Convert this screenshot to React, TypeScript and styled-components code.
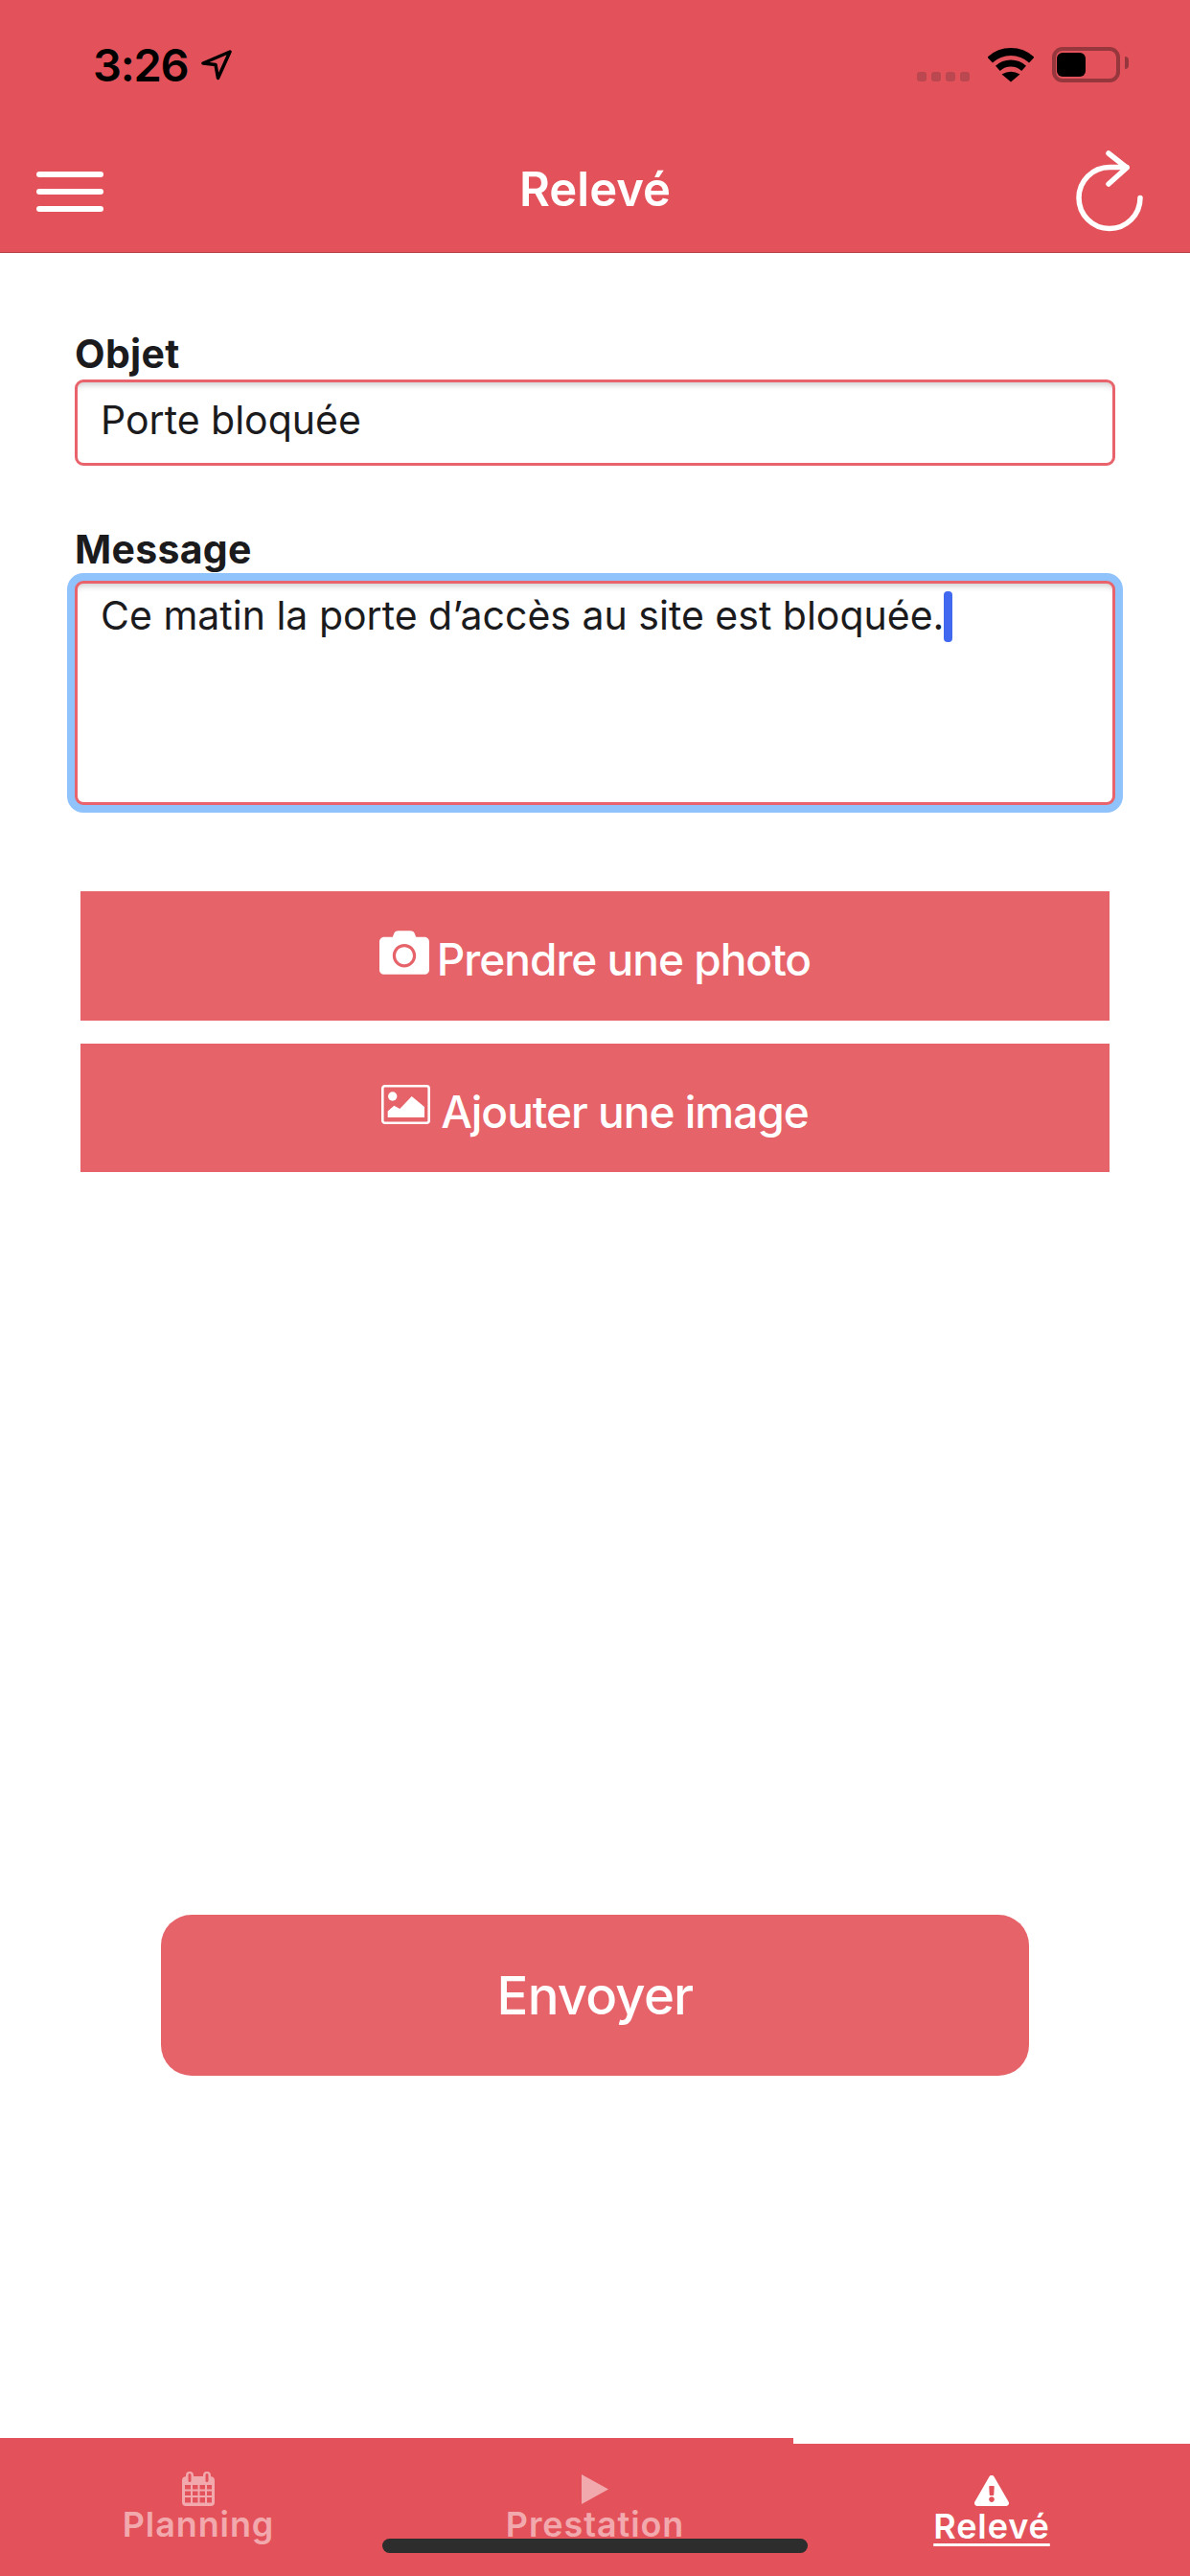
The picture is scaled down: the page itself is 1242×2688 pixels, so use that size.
import React from "react";
import styled, { createGlobalStyle } from "styled-components";
import { FaCamera, FaExclamationTriangle } from "react-icons/fa";

const RED = "#E3525A";
const SOFT_RED = "#E6636A";

const GlobalStyle = createGlobalStyle`
    html, body {
        margin: 0;
        padding: 0;
        background: #FFFFFF;
    }
    * {
        box-sizing: border-box;
    }
`;

const Screen = styled.div`
    position: relative;
    display: flex;
    flex-direction: column;
    width: 1242px;
    height: 2688px;
    overflow: hidden;
    background: #FFFFFF;
    font-family: Inter, "Liberation Sans", sans-serif;
    color: #1B1B1D;
`;

const Header = styled.header`
    height: 264px;
    background: ${RED};
    border-bottom: 1px solid #B5434A;
    color: #FFFFFF;
`;

const StatusBar = styled.div`
    display: flex;
    justify-content: space-between;
    align-items: flex-start;
    height: 132px;
    padding: 44px 73px 0 97px;
`;

const TimeGroup = styled.div`
    display: flex;
    align-items: flex-start;
    gap: 14px;
`;

const Time = styled.span`
    font-size: 47px;
    line-height: 48px;
    font-weight: 600;
    letter-spacing: -1.2px;
    color: #000000;
`;

const LocationIcon = styled.svg`
    width: 32px;
    height: 32px;
    margin-top: 8px;
`;

const StatusIcons = styled.div`
    display: flex;
    align-items: flex-start;
    padding-top: 5px;
`;

const SignalDots = styled.div`
    display: flex;
    gap: 5px;
    margin: 26px 19px 0 0;
`;

const SignalDot = styled.span`
    width: 10px;
    height: 10px;
    border-radius: 3px;
    background: #BB4850;
`;

const WifiIcon = styled.svg`
    width: 48px;
    height: 37px;
    margin-right: 19px;
`;

const Battery = styled.div`
    position: relative;
    width: 71px;
    height: 37px;
    padding: 2px 1px;
    border: 4px solid #96363D;
    border-radius: 11px;
    &::after {
        content: '';
        position: absolute;
        top: 6px;
        right: -13px;
        width: 4px;
        height: 13px;
        border-radius: 0 6px 6px 0;
        background: #96363D;
    }
`;

const BatteryLevel = styled.div`
    width: 30px;
    height: 25px;
    border-radius: 6px;
    background: #000000;
`;

const NavBar = styled.div`
    display: grid;
    grid-template-columns: 1fr auto 1fr;
    align-items: center;
    height: 131px;
    padding: 0 38px;
`;

const Hamburger = styled.div`
    display: flex;
    flex-direction: column;
    gap: 12px;
    width: 70px;
    margin-top: 4px;
`;

const HamburgerLine = styled.span`
    height: 6px;
    border-radius: 3px;
    background: #FFFFFF;
`;

const Title = styled.h1`
    margin: 0;
    font-size: 49px;
    line-height: 58px;
    font-weight: 600;
    letter-spacing: 0;
`;

const RefreshIcon = styled.svg`
    justify-self: end;
    width: 76px;
    height: 94px;
    margin-right: 8px;
`;

const Main = styled.main`
    flex: 1;
    display: flex;
    flex-direction: column;
    padding: 81px 78px 0;
`;

const Label = styled.label<{ $gap: number }>`
    display: block;
    margin-bottom: ${({ $gap }) => $gap}px;
    font-size: 41px;
    line-height: 48px;
    font-weight: 700;
    letter-spacing: 0.3px;
`;

const Field = styled.div<{ $focused?: boolean }>`
    height: ${({ $focused }) => ($focused ? 234 : 90)}px;
    margin-bottom: ${({ $focused }) => ($focused ? 0 : 63)}px;
    padding: ${({ $focused }) => ($focused ? 8 : 15)}px 24px 0;
    border: 3px solid #E8636B;
    border-radius: 9px;
    background: #FFFFFF;
    font-size: 41px;
    line-height: 48px;
    box-shadow: inset 0 9px 7px -7px rgba(0, 0, 0, 0.22)
        ${({ $focused }) => ($focused ? ", 0 0 0 8px #90C2FB" : "")};
`;

const Caret = styled.span`
    display: inline-block;
    width: 9px;
    height: 53px;
    margin-right: -9px;
    border-radius: 4px;
    background: #4169F0;
    vertical-align: -13px;
`;

const ActionList = styled.div`
    display: flex;
    flex-direction: column;
    gap: 24px;
    margin: 90px 6px 0;
`;

const ActionButton = styled.button<{ $gap: number }>`
    display: flex;
    align-items: center;
    justify-content: center;
    gap: ${({ $gap }) => $gap}px;
    height: 134.5px;
    padding: 8px 0 0;
    border: 0;
    border-radius: 0;
    background: ${SOFT_RED};
    color: #FFFFFF;
    font-family: inherit;
    font-size: 46px;
    line-height: 56px;
    font-weight: 500;
    letter-spacing: -1px;
    svg {
        flex: none;
        margin-top: -14px;
    }
`;

const SendRow = styled.div`
    display: flex;
    justify-content: center;
    margin-top: 775px;
`;

const SendButton = styled.button`
    width: 906px;
    height: 168px;
    border: 0;
    border-radius: 32px;
    background: ${SOFT_RED};
    color: #FFFFFF;
    font-family: inherit;
    font-size: 54.5px;
    font-weight: 500;
    letter-spacing: -0.8px;
`;

const TabBar = styled.nav`
    display: grid;
    grid-template-columns: repeat(3, 414px);
    height: 144px;
`;

const Tab = styled.div<{ $active?: boolean }>`
    display: flex;
    flex-direction: column;
    align-items: center;
    margin-top: ${({ $active }) => ($active ? 6 : 0)}px;
    padding-top: ${({ $active }) => ($active ? 29 : 33)}px;
    background: ${RED};
    color: ${({ $active }) => ($active ? "#FFFFFF" : "#F2A9AD")};
`;

const TabIcon = styled.div`
    display: flex;
    align-items: center;
    justify-content: center;
    height: 40px;
`;

const TabLabel = styled.span<{ $active?: boolean }>`
    margin-top: -1px;
    font-size: 36px;
    line-height: 36px;
    font-weight: 600;
    letter-spacing: 0.9px;
    text-decoration: ${({ $active }) => ($active ? "underline" : "none")};
    text-decoration-thickness: 3px;
    text-underline-offset: 5px;
`;

const HomeIndicator = styled.div`
    position: absolute;
    left: 399px;
    bottom: 24px;
    width: 444px;
    height: 15px;
    border-radius: 8px;
    background: #2D2D2D;
`;

const CalendarIcon = () => (
    <svg width="34" height="36" viewBox="0 0 34 36">
        <path
            fill="currentColor"
            fillRule="evenodd"
            d="M8 0a4 4 0 0 1 4 4v1h10V4a4 4 0 0 1 8 0v1.2A4 4 0 0 1 34 9v23a4 4 0 0 1-4 4H4a4 4 0 0 1-4-4V9a4 4 0 0 1 4-3.8V4a4 4 0 0 1 4-4zM6.5 3.5v6a1.5 1.5 0 0 0 3 0v-6a1.5 1.5 0 0 0-3 0zm18 0v6a1.5 1.5 0 0 0 3 0v-6a1.5 1.5 0 0 0-3 0zM3 14v4.5h6V14zm8 0v4.5h5.500V14zm7.500 0v4.500H24V14zM26 14v4.500h5V14zM3 20.500V25h6v-4.500zm8 0V25h5.500v-4.500zm7.500 0V25H24v-4.500zm7.500 0V25h5v-4.500zM3 27v5.500h6V27zm8 0v5.500h5.500V27zm7.500 0v5.500H24V27zM26 27v5.500h5V27z"
        />
    </svg>
);

const PictureIcon = () => (
    <svg width="51" height="41" viewBox="0 0 51 41">
        <rect x="1.3" y="1.3" width="48.400" height="38.400" rx="2.500" fill="none" stroke="currentColor" strokeWidth="2.600" />
        <circle cx="11.700" cy="12" r="4.700" fill="currentColor" />
        <path fill="currentColor" d="M6.700 34v-6.500l6.600-5.800 6 3.300L31.700 12 45 23v11z" />
    </svg>
);

const App = () => {
    return (
        <Screen>
            <GlobalStyle />
            <Header>
                <StatusBar>
                    <TimeGroup>
                        <Time>3:26</Time>
                        <LocationIcon viewBox="0 0 32 32">
                            <path d="M30 2 2 14l13 1.500L17.500 29.500z" fill="none" stroke="#000" strokeWidth="3.500" strokeLinejoin="round" />
                        </LocationIcon>
                    </TimeGroup>
                    <StatusIcons>
                        <SignalDots>
                            <SignalDot />
                            <SignalDot />
                            <SignalDot />
                            <SignalDot />
                        </SignalDots>
                        <WifiIcon viewBox="0 0 48 37">
                            <path d="M2.200 13.600A32 32 0 0 1 45.800 13.600" fill="none" stroke="#000" strokeWidth="8" />
                            <path d="M10.400 22.400A20 20 0 0 1 37.600 22.400" fill="none" stroke="#000" strokeWidth="7" />
                            <path d="M24 36.500 14.500 28.500Q24 23 33.500 28.500z" fill="#000" />
                        </WifiIcon>
                        <Battery>
                            <BatteryLevel />
                        </Battery>
                    </StatusIcons>
                </StatusBar>
                <NavBar>
                    <Hamburger>
                        <HamburgerLine />
                        <HamburgerLine />
                        <HamburgerLine />
                    </Hamburger>
                    <Title>Relevé</Title>
                    <RefreshIcon viewBox="0 0 76 94" fill="none" stroke="#FFFFFF" strokeWidth="5.500" strokeLinecap="round" strokeLinejoin="round">
                        <path d="M70 55.500A32 32 0 1 1 38 23.500H56" />
                        <path d="M37 9 56 24 37 41" />
                    </RefreshIcon>
                </NavBar>
            </Header>
            <Main>
                <Label $gap={3}>Objet</Label>
                <Field>Porte bloquée</Field>
                <Label $gap={9}>Message</Label>
                <Field $focused>
                    Ce matin la porte d’accès au site est bloquée.<Caret />
                </Field>
                <ActionList>
                    <ActionButton $gap={8}>
                        <FaCamera size={52} />
                        Prendre une photo
                    </ActionButton>
                    <ActionButton $gap={11}>
                        <PictureIcon />
                        Ajouter une image
                    </ActionButton>
                </ActionList>
                <SendRow>
                    <SendButton>Envoyer</SendButton>
                </SendRow>
            </Main>
            <TabBar>
                <Tab>
                    <TabIcon>
                        <CalendarIcon />
                    </TabIcon>
                    <TabLabel>Planning</TabLabel>
                </Tab>
                <Tab>
                    <TabIcon>
                        <svg width="28" height="31" viewBox="0 0 28 31">
                            <path fill="currentColor" d="M0 0 28 15.500 0 31z" />
                        </svg>
                    </TabIcon>
                    <TabLabel>Prestation</TabLabel>
                </Tab>
                <Tab $active>
                    <TabIcon>
                        <FaExclamationTriangle size={36} />
                    </TabIcon>
                    <TabLabel $active>Relevé</TabLabel>
                </Tab>
            </TabBar>
            <HomeIndicator />
        </Screen>
    );
};

export default App;
